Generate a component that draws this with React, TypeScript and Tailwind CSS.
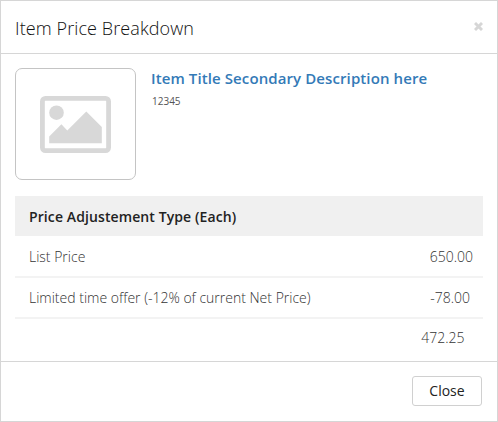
import { useState } from 'react'

interface IAdjustment {
  label: string
  amount: string
  height: string
  offset: string
}

const adjustments: IAdjustment[] = [
  { label: 'List Price', amount: '650.00', height: 'h-[42px]', offset: 'pr-2.5' },
  { label: 'Limited time offer (-12% of current Net Price)', amount: '-78.00', height: 'h-[41px]', offset: 'pr-[13px]' },
]

function CloseIcon() {
  return (
    <svg width="9" height="9" viewBox="0 0 9 9" stroke="#d6d6d6" strokeWidth="2.9">
      <path d="M1 1L8 8M8 1L1 8" />
    </svg>
  )
}

function ImageIcon() {
  return (
    <svg width="71" height="57" viewBox="0 0 71 57" fill="#d8d8d8">
      <rect x="2.4" y="2.4" width="66.2" height="52.2" rx="3" fill="none" stroke="#d8d8d8" strokeWidth="4.8" />
      <circle cx="16.5" cy="16.7" r="7.3" />
      <path d="M9.2 47.3V40.5L21.4 28.3L27.3 34.4L46.3 15.4L61.8 30.9V47.3Z" />
    </svg>
  )
}

export default function App() {
  // States
  const [open, setOpen] = useState(true)

  if (!open) return null

  return (
    <div className="flex h-[422px] w-[498px] flex-col border border-[#d6d6d6] bg-white font-['Open_Sans',sans-serif]">
      <div className="flex h-[53px] shrink-0 items-center justify-between border-b border-[#d6d6d6] px-3.5 pt-0.5">
        <h1 className="text-[18px] leading-6 font-light tracking-[0.1px] text-[#111]">Item Price Breakdown</h1>
        <button className="mb-1" aria-label="Close" onClick={() => setOpen(false)}>
          <CloseIcon />
        </button>
      </div>

      <div className="flex h-[307px] shrink-0 flex-col px-3.5 pt-3.5">
        <div className="flex gap-[15px]">
          <div className="flex h-28 w-[121px] items-center justify-center rounded-[7px] border border-[#c4c4c4] pt-px">
            <ImageIcon />
          </div>
          <div>
            <a className="block text-[15px] leading-5 font-semibold tracking-[0.1px] text-[#337ab7]">
              Item Title Secondary Description here
            </a>
            <div className="mt-[5px] pl-px text-[10px] leading-4 text-[#555]">12345</div>
          </div>
        </div>

        <div className="mt-4 flex w-[468px] flex-col text-[14px] font-light text-[#333]">
          <div className="flex h-10 items-center bg-[#f0f0f0] px-3.5 font-semibold tracking-[0.1px] text-[#222]">
            Price Adjustement Type (Each)
          </div>
          {adjustments.map((a) => (
            <div
              key={a.label}
              className={`flex items-center justify-between border-b-2 border-[#f3f3f3] pl-3.5 ${a.height}`}
            >
              <span>{a.label}</span>
              <span className={a.offset}>{a.amount}</span>
            </div>
          ))}
          <div className="flex h-[37px] items-center justify-end pr-[18.5px]">472.25</div>
        </div>
      </div>

      <div className="flex flex-1 justify-end border-t border-[#d6d6d6] pt-3.5 pr-[15px]">
        <button
          className="h-[30px] w-[70px] rounded-[3px] border border-[#d0d0d0] pb-0.5 text-[14px] text-[#222]"
          onClick={() => setOpen(false)}
        >
          Close
        </button>
      </div>
    </div>
  )
}
